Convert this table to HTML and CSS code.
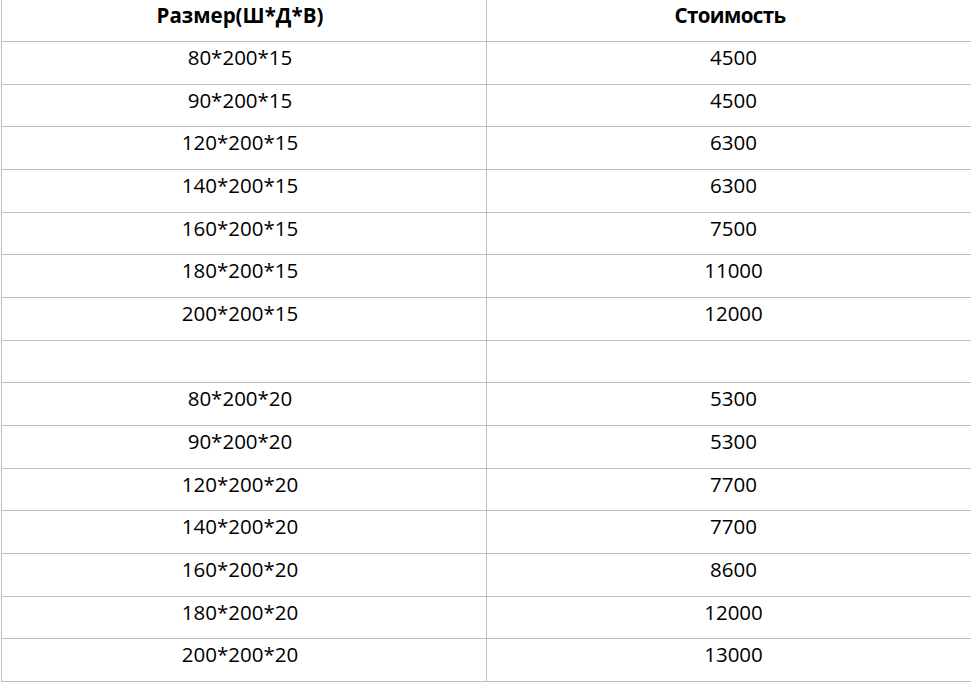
FILE: index.html
```html
<!DOCTYPE html>
<html lang="ru">
<head>
<meta charset="utf-8">
<title>Таблица цен</title>
<link rel="stylesheet" href="styles.css">
</head>
<body>
<div class="sheet">
  <div class="row head"><div class="cell left">Размер(Ш*Д*В)</div><div class="cell right">Стоимость</div></div>
  <div class="row"><div class="cell left">80*200*15</div><div class="cell right">4500</div></div>
  <div class="row"><div class="cell left">90*200*15</div><div class="cell right">4500</div></div>
  <div class="row"><div class="cell left">120*200*15</div><div class="cell right">6300</div></div>
  <div class="row"><div class="cell left">140*200*15</div><div class="cell right">6300</div></div>
  <div class="row"><div class="cell left">160*200*15</div><div class="cell right">7500</div></div>
  <div class="row"><div class="cell left">180*200*15</div><div class="cell right">11000</div></div>
  <div class="row"><div class="cell left">200*200*15</div><div class="cell right">12000</div></div>
  <div class="row"><div class="cell left"></div><div class="cell right"></div></div>
  <div class="row"><div class="cell left">80*200*20</div><div class="cell right">5300</div></div>
  <div class="row"><div class="cell left">90*200*20</div><div class="cell right">5300</div></div>
  <div class="row"><div class="cell left">120*200*20</div><div class="cell right">7700</div></div>
  <div class="row"><div class="cell left">140*200*20</div><div class="cell right">7700</div></div>
  <div class="row"><div class="cell left">160*200*20</div><div class="cell right">8600</div></div>
  <div class="row"><div class="cell left">180*200*20</div><div class="cell right">12000</div></div>
  <div class="row"><div class="cell left">200*200*20</div><div class="cell right">13000</div></div>
</div>
</body>
</html>
```
FILE: styles.css
```css
html, body {
  margin: 0;
  padding: 0;
  background: #ffffff;
}
.sheet {
  width: 971px;
  height: 682px;
  display: grid;
  grid-template-rows: 42px repeat(15, 42.6667px);
  padding-left: 1px;
  box-sizing: border-box;
  font-family: "Open Sans", "Noto Sans", sans-serif;
  font-size: 20.5px;
  color: #000000;
  overflow: hidden;
}
.row {
  display: grid;
  grid-template-columns: 486px 1fr;
  border-bottom: 1px solid #bdbdbd;
  box-sizing: border-box;
}
.head {
  font-weight: 700;
}
.head .right {
  letter-spacing: -0.6px;
  padding-left: 2px;
}
.cell {
  padding-top: 3px;
  line-height: 24px;
  text-align: center;
  white-space: nowrap;
}
.left {
  border-left: 1px solid #bdbdbd;
  border-right: 1px solid #bdbdbd;
  padding-right: 8px;
}
.right {
  padding-left: 9px;
}
```
